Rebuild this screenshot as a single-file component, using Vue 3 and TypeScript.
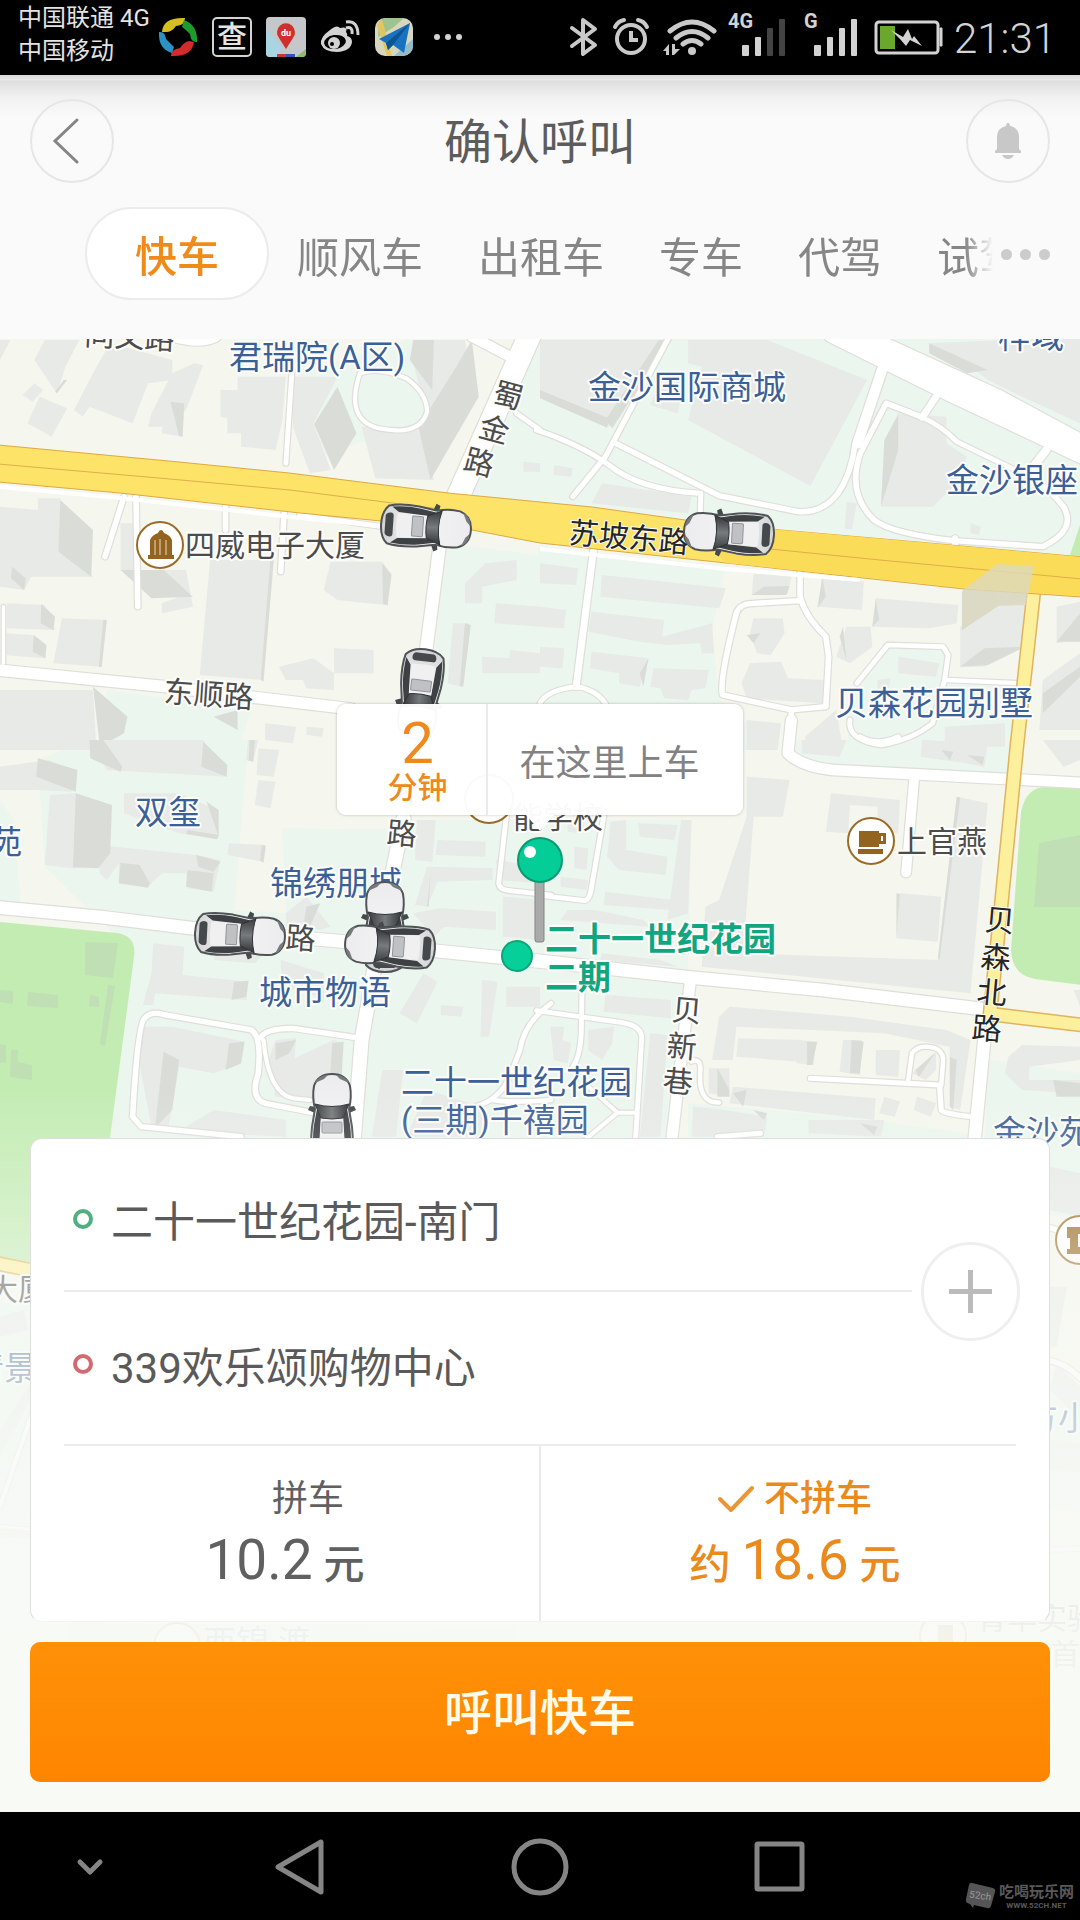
<script setup lang="ts">
import { ref } from 'vue'

interface Road { d: string; w: number }
interface Tile { at: string; land: string[]; flat: string[]; side: string[]; roads: Road[] }
interface Label { text: string; x: number; y: number; kind: string; turn?: number }
interface Car { x: number; y: number; turn: number }

const services = ['快车', '顺风车', '出租车', '专车', '代驾', '试驾']
const activeService = ref('快车')

const rides = [
  { id: 'pool', name: '拼车', prefix: '', price: '10.2' },
  { id: 'solo', name: '不拼车', prefix: '约', price: '18.6' },
]
const ride = ref('solo')

const cars: Car[] = [
  { x: 426, y: 527, turn: 4 },
  { x: 729, y: 533, turn: 183 },
  { x: 420, y: 694, turn: 97 },
  { x: 240, y: 935, turn: 3 },
  { x: 385, y: 927, turn: -90 },
  { x: 390, y: 946, turn: 184 },
  { x: 332, y: 1119, turn: -90 },
]

/* Map sheets: each one is drawn in its own local units. */
const tiles: Tile[] = [
  {
    at: 'translate(0 330) scale(0.3444 0.3333)',
    land: [
      '1600,20 1530,20 1330,500 1600,530',
      '870,130 1180,30 1210,30 1260,260 1090,320 930,380 860,270',
      '1290,640 1600,680 1600,1260 1250,1160',
      '310,1080 730,1140 690,1260 300,1260',
    ],
    flat: [
      '0,30 30,30 0,90',
      '130,30 230,30 190,110 165,190 100,90', '320,40 500,90 500,150 430,160 385,280 260,230 240,260 215,240 275,120',
      '100,160 125,180 95,215 65,195',
      '115,200 195,235 150,320 80,280', '565,100 590,105 540,240 470,290 430,290 440,250 500,130',
      '480,220 535,215 530,320 470,310', '640,180 690,180 690,140 830,140 820,270 800,360 700,350 700,310 660,310 660,265 640,260',
      '850,140 980,140 910,280 960,420 900,430 850,290', '1050,290 1220,290 1260,450 1090,445',
      '0,530 110,540 110,505 175,505 175,660 270,740 0,740', '0,690 90,740 70,780 0,770',
      '350,580 400,580 400,720 540,720 560,830 470,850 470,820 520,800 440,800 350,720',
      '610,690 790,690 765,1050 580,1035', '960,695 1110,695 1135,730 1120,825 980,810 940,780',
      '20,820 130,825 160,900 20,895', '10,910 95,915 130,985 10,975', '180,865 310,870 295,1010 155,1000',
      '970,955 1085,960 1085,1030 970,1030', '810,1010 910,985 970,1030 970,1080 890,1075 880,1050 830,1050',
      '1350,760 1410,700 1500,690 1500,750 1400,770 1400,820 1350,820', '1440,820 1568,830 1568,890 1435,880',
      '1315,880 1360,880 1340,1070 1300,1060', '1400,980 1480,985 1480,960 1568,970 1568,1030 1400,1030',
      '0,1080 270,1080 280,1260 0,1260', '770,1180 860,1190 850,1240 770,1230', '890,1190 940,1195 935,1220 890,1215',
      '1200,30 1350,30 1380,200 1330,300 1270,380 1200,100', '1520,395 1568,400 1568,425 1520,425',
    ],
    side: [
      '980,170 1035,310 970,420 912,282', '1325,110 1370,30 1390,200 1250,450 1215,290', '175,510 270,600 265,740 170,665',
      '350,720 475,720 560,800 440,805', '120,822 160,860 155,900 118,880', '98,915 135,945 132,985 95,965',
      '300,870 310,870 295,1012 287,1010', '1110,700 1137,735 1125,827 1112,820', '785,690 795,690 765,1055 757,1050',
      '35,710 75,745 70,780 32,745', '1200,30 1260,30 1255,180 1190,90', '270,1070 370,1160 360,1210 290,1250',
      '620,1160 690,1140 690,1200', '185,150 195,150 165,190 160,185', '495,215 535,220 530,320 520,318',
      '1350,880 1367,885 1345,1070 1335,1068',
    ],
    roads: [
      { d: 'M1540 10L1330 500', w: 66 }, { d: 'M1280 620L1235 980', w: 36 },
      { d: 'M-10 1020L480 1070L1020 1137', w: 34 }, { d: 'M395 500L400 830', w: 16 }, { d: 'M360 500L305 680', w: 16 },
      { d: 'M848 120L830 400', w: 14 }, { d: 'M655 530L655 600', w: 16 }, { d: 'M825 550L815 725', w: 16 },
      { d: 'M1045 130Q1000 270 1100 295Q1220 320 1240 245Q1240 190 1180 145Q1100 110 1045 130', w: 12 },
      { d: 'M10 830L10 1000', w: 10 }, { d: 'M500 24Q580 50 630 24', w: 20 }, { d: 'M1370 20L1500 90', w: 30 },
      { d: 'M1500 250L1568 300', w: 14 }, { d: 'M870 555L1110 590', w: 14 },
    ],
  },
  {
    at: 'translate(540 330) scale(0.3444 0.3333)',
    land: [
      '-5,20 1600,20 1600,690 -5,520',
      '-5,650 540,710 500,900 520,1110 600,1180 600,1260 -5,1260',
      '920,1060 1020,940 1180,950 1190,1050 1400,1070 1380,1260 900,1260 890,1180',
    ],
    flat: [
      '0,30 360,30 200,290 0,200', '430,30 540,30 660,30 950,150 785,468 430,270 470,110 430,100', '360,130 420,150 400,250 320,225',
      '1040,250 1180,260 1180,340 1240,380 1200,470 1140,530 990,530 1000,330', '1130,40 1568,20 1568,280 1400,200 1300,150 1240,100 1130,60',
      '180,460 440,500 430,550 150,520', '890,515 920,520 905,600 885,595', '0,700 110,715 105,765 0,760',
      '180,735 540,775 520,835 175,800', '0,830 75,840 70,895 0,890', '150,845 360,870 355,920 500,880 505,970 470,970 465,940 370,945 290,935 140,905',
      '0,950 70,955 65,1015 0,1010', '150,965 315,985 300,1025 290,1070 230,1060 230,1030 145,1015',
      '330,1015 490,1020 480,1075 440,1080 430,1110 360,1105 350,1075 320,1070', '620,730 730,740 720,790 615,795',
      '820,735 940,755 935,840 810,830', '975,805 1215,825 1210,880 1130,895 965,890', '620,865 705,865 710,910 670,975 630,970 610,910',
      '610,1000 700,995 720,1045 825,1050 820,1120 600,1105 585,1060', '890,890 960,890 965,950 900,1000 860,980',
      '1040,980 1160,1000 1150,1040 1040,1030', '1220,890 1330,820 1420,820 1410,950 1290,1010 1220,1010', '1500,830 1568,815 1568,930 1500,940',
      '1460,1050 1568,970 1568,1200 1450,1200', '1175,1190 1350,1180 1350,1250 1175,1250', '600,1170 700,1180 690,1260 600,1260', '860,1140 880,1260 770,1260 770,1220',
      '1250,580 1280,590 1275,615 1250,610', '40,405 95,415 90,440 40,435', '980,1050 1020,1045 1010,1080 980,1085',
    ],
    side: [
      '345,30 375,30 210,295 190,270', '0,180 200,265 195,293 0,205', '1000,330 1040,255 1040,360 990,530', '1225,785 1330,700 1335,825 1225,900',
      '1330,705 1435,705 1415,820 1335,825', '615,795 650,770 725,768 715,795', '805,835 820,740 830,800',
      '965,890 975,808 985,870', '1290,955 1410,950 1300,1005 1220,1010', '600,915 640,910 620,940', '1460,1090 1568,1010 1568,1040 1460,1150',
      '1500,935 1568,850 1568,935', '290,1030 315,985 300,1070', '870,920 880,890 890,990', '1130,40 1300,120 1240,130 1130,70',
    ],
    roads: [
      { d: 'M850 10L1190 185L1600 385', w: 56 }, { d: 'M930 10L1330 200L1600 350', w: 42 },
      { d: 'M375 20L190 380L95 500', w: 15 }, { d: 'M-10 300Q120 345 200 405Q290 480 465 490', w: 15 },
      { d: 'M220 340L520 497L750 545Q820 550 865 490Q905 430 915 340', w: 16 }, { d: 'M467 490L465 560', w: 14 },
      { d: 'M993 120L922 340', w: 30 }, { d: 'M1110 262L1005 220L930 370Q890 490 970 570Q1020 610 1200 632L1460 650Q1560 600 1520 530Q1490 490 1430 440', w: 16 },
      { d: 'M1110 262Q1170 290 1210 335L1420 440', w: 14 }, { d: 'M1110 262L1150 200', w: 20 }, { d: 'M1425 420L1470 360', w: 24 },
      { d: 'M1205 625L1205 650', w: 18 }, { d: 'M155 665L148 720L105 1070', w: 20 }, { d: 'M105 1070Q20 1080 0 1120', w: 14 },
      { d: 'M105 1070Q170 1080 195 1130', w: 14 }, { d: 'M755 730L755 800Q770 860 830 920L838 980L830 1130L730 1140L530 1095Q520 1050 570 850Q580 820 620 820L755 812', w: 16 },
      { d: 'M730 1140L725 1260', w: 16 }, { d: 'M920 1060L1010 945L1170 950L1185 975L1175 1050L1140 1180Q1080 1230 990 1245Q890 1230 900 1170', w: 14 },
      { d: 'M1180 1050L1400 1060', w: 13 },
    ],
  },
  {
    at: 'translate(0 740) scale(0.3444 0.3333)',
    land: [
      '110,60 260,0 720,0 680,510 830,520 820,265 1110,270 1160,240 1568,240 1568,1240 300,1240 390,640 250,500 130,380',
      '0,180 40,240 60,490 0,490',
    ],
    flat: [
      '0,80 140,60 220,90 210,155 110,150 0,150', '260,0 590,0 660,110 310,90', '145,165 220,160 325,200 280,380 210,385 130,375',
      '360,160 520,160 630,210 635,295 520,280 360,220', '280,315 570,345 640,360 620,455 545,445 540,400 470,400 430,440 345,430 345,370 310,420 290,400',
      '665,310 770,315 765,365 660,345', '750,25 810,30 795,110 745,105', '750,120 800,125 785,205 740,195',
      '445,610 535,620 530,705 720,725 715,780 450,760 445,795 415,795 440,700', '415,860 500,860 710,905 700,970 620,1000 520,980 490,1160 440,1160 410,1000 400,900',
      '800,900 860,895 855,955 970,900 995,910 990,1000 970,1080 800,1070 780,960', '620,1110 830,1140 830,1190 600,1180 540,1160',
      '1210,240 1265,240 1255,365 1205,360', '1270,300 1410,305 1410,350 1265,345', '1240,380 1430,385 1430,420 1270,425 1240,500 1205,495',
      '1280,505 1440,515 1440,570 1290,560 1260,590 1200,520', '1230,700 1270,725 1210,850 1160,820', '1400,720 1445,725 1420,890 1395,890',
      '1470,740 1568,740 1568,800 1470,800', '1280,795 1345,800 1340,830 1280,825', '815,660 940,700 940,790 880,740 820,760', '890,470 960,560 930,570 830,560 830,520',
      '1110,990 1170,990 1150,1190 1080,1190', '1240,1050 1400,1100 1400,1190 1180,1190', '720,0 750,0 735,65 715,60', '1460,470 1568,480 1568,600 1460,590',
      '640,610 780,625 740,670 620,660', '1440,360 1568,380 1568,430 1445,420',
    ],
    side: [
      '110,55 225,90 220,155 105,110', '220,160 325,195 320,340 285,385 212,382', '260,0 300,0 355,80 350,95 262,55', '590,5 660,75 658,110 585,80',
      '570,345 640,365 620,395 575,380', '545,390 620,400 615,455 540,440', '350,368 405,375 435,430 430,443 345,430', '680,725 722,722 715,770 672,780',
      '665,910 710,905 700,970 655,990', '475,935 520,960 500,1110 450,1165', '965,910 998,905 990,1040 955,1070', '545,270 635,285 630,298 540,282',
      '760,315 772,318 765,368 755,362', '600,185 635,210 635,290', '800,910 860,900 840,940 800,960', '890,500 930,490 900,560 880,560',
      '725,0 740,0 735,65 722,62', '1240,500 1250,400 1245,500',
    ],
    roads: [
      { d: 'M-10 502L300 532L560 565L1000 605L1600 668', w: 38 }, { d: 'M1172 235L1145 370L1095 640L1050 900L1025 1230', w: 40 },
      { d: 'M700 1190L410 1160L385 1130Q400 850 420 835Q440 810 480 825L730 870Q760 890 750 1000Q725 1075 770 1090L920 1120', w: 16 },
      { d: 'M755 895Q770 865 850 865L1050 895', w: 16 }, { d: 'M765 900Q780 1060 850 1075L900 1080', w: 12 },
      { d: 'M1470 230L1448 430Q1450 450 1480 452L1600 465', w: 14 }, { d: 'M1600 790Q1520 850 1510 930L1480 1010Q1450 1080 1380 1100', w: 14 },
      { d: 'M1430 1080Q1480 1090 1600 1080', w: 14 },
    ],
  },
  {
    at: 'translate(540 740) scale(0.3444 0.3333)',
    land: [
      '-5,240 440,240 430,650 420,800 370,1240 -5,1240', '700,0 1370,0 1360,100 850,90 740,50',
      '430,1090 880,1130 1240,1180 1240,1240 430,1240', '1300,960 1568,1000 1568,1240 1290,1240',
    ],
    flat: [
      '600,110 725,120 705,230 620,230 590,640 1155,660 1210,170 1300,190 1250,760 470,680 480,500 520,480 600,230',
      '845,160 1045,180 1040,280 980,280 980,200 900,195 895,280 830,275', '1045,460 1165,470 1155,605 1035,595',
      '205,245 250,240 250,330 370,350 365,405 230,390 195,350', '285,250 400,255 390,300 290,290', '190,455 385,480 380,510 185,495',
      '80,240 130,245 125,280 80,275', '100,320 140,325 135,390 100,385', '60,410 140,420 135,450 60,440', '80,510 160,510 300,540 320,560 60,540',
      '410,240 440,240 430,520 370,540', '180,640 350,660 400,680 175,660', '190,765 380,780 380,835 185,815', '550,800 900,830 1180,870 1250,900 1220,1110 1190,1100 1190,920 1000,880 570,860 560,960 500,960 520,830',
      '575,895 760,900 750,965 570,950', '750,900 800,905 795,975 745,970', '880,900 935,900 930,1005 870,995', '975,930 1045,930 1040,1010 975,1005',
      '490,985 550,985 550,1070 490,1060', '560,1040 975,1075 970,1140 550,1090', '1000,1070 1045,1085 1030,1130 985,1120', '1095,1070 1150,1090 1135,1130 1085,1110',
      '445,1100 500,1105 660,1130 650,1190 440,1190', '780,1140 1000,1140 990,1190 780,1180', '320,880 370,885 350,1190 290,1190', '760,0 890,0 870,50 760,40',
      '1110,0 1300,10 1290,80 1240,70 1170,60 1105,50', '1460,0 1568,0 1568,60 1520,80', '1400,915 1568,920 1568,960 1420,980 1420,1020 1568,1020 1568,1060 1400,1050 1350,1000 1360,950', '30,860 70,860 65,900 90,910 80,970 40,960', '140,870 215,860 210,910 180,960 140,930',
      '1080,1000 1150,940 1150,990 1120,1020', '1550,750 1568,750 1568,800',
    ],
    side: [
      '775,905 805,905 790,975 775,975', '905,900 940,905 928,1000 900,1000', '1090,990 1150,935 1100,1010', '1190,950 1210,960 1200,1110 1190,1100', '1035,460 1045,462 1035,595', '1210,170 1220,172 1160,660 1155,655',
      '1490,1020 1568,1030 1568,1070 1500,1070', '515,985 550,1050 550,1070 515,1070', '560,1060 600,1050 590,1100', '620,1110 660,1120 650,1140', '930,1150 980,1160 970,1185', '1165,30 1200,35 1190,60', '1240,45 1290,50 1285,75',
    ],
    roads: [
      { d: 'M730 -60L720 40Q760 80 850 90L1600 130', w: 32 }, { d: 'M1087 110L1063 398', w: 28 }, { d: 'M-10 662L430 712L820 750L1290 808', w: 38 },
      { d: 'M437 720L378 1240', w: 32 }, { d: 'M440 965Q470 950 465 1000Q460 1090 520 1088', w: 13 }, { d: 'M785 1015L1160 1035L1165 1110Q1165 1120 1250 1130', w: 15 },
      { d: 'M1068 1030L1080 940Q1100 910 1150 925Q1175 940 1170 970L1165 1035', w: 13 }, { d: 'M1292 880L1258 1240', w: 36 }, { d: 'M560 1240L515 1190L640 1180', w: 15 },
      { d: 'M-10 465L130 482Q145 480 150 440L185 230', w: 14 }, { d: 'M122 745L120 870Q118 950 95 980', w: 14 }, { d: 'M-10 812L240 848Q300 860 295 900L275 1240', w: 14 },
      { d: 'M130 1030L225 1118L275 1118', w: 12 }, { d: 'M225 1118L130 1200', w: 12 }, { d: 'M930 -10Q980 20 1040 -10', w: 14 },
    ],
  },
  {
    at: 'translate(0 1130) scale(0.3444 0.3333)',
    land: ['0,520 110,520 110,1600 0,1600'],
    flat: ['0,560 70,540 80,600 0,620', '90,760 100,790 0,980 0,900', '0,1180 100,1190 100,1225 0,1220', '200,1480 1500,1490 1500,1530 200,1530'],
    side: [],
    roads: [{ d: 'M110 800L0 1130', w: 12 }, { d: 'M0 1190L110 1200', w: 10 }],
  },
  {
    at: 'translate(540 1130) scale(0.3444 0.3333)',
    land: ['1470,20 1600,20 1600,300 1470,250', '1470,800 1600,820 1600,1150 1470,1130'],
    flat: ['1480,110 1568,130 1568,260 1480,240', '1480,470 1530,470 1500,650 1480,650', '1500,700 1600,800 1600,900 1480,780', '1480,930 1600,940 1600,1030 1480,1020'],
    side: [],
    roads: [{ d: 'M1470 290L1600 330', w: 16 }, { d: 'M1470 690Q1540 700 1600 780', w: 16 }, { d: 'M1470 1260L1600 1255', w: 12 }],
  },
]

const labels: Label[] = [
  { text: '同文路', x: 84, y: 345, kind: 'street', turn: 3 },
  { text: '君瑞院(A区)', x: 229, y: 369, kind: 'area' },
  { text: '金沙国际商城', x: 588, y: 399, kind: 'area' },
  { text: '梓域', x: 998, y: 348, kind: 'area' },
  { text: '金沙银座', x: 946, y: 492, kind: 'area' },
  { text: '四威电子大厦', x: 185, y: 556, kind: 'place' },
  { text: '苏坡东路', x: 568, y: 543, kind: 'main', turn: 5 },
  { text: '蜀', x: 491, y: 402, kind: 'street', turn: 15 },
  { text: '金', x: 477, y: 436, kind: 'street', turn: 15 },
  { text: '路', x: 462, y: 469, kind: 'street', turn: 15 },
  { text: '东顺路', x: 163, y: 702, kind: 'street', turn: 4 },
  { text: '贝森花园别墅', x: 835, y: 715, kind: 'area' },
  { text: '双玺', x: 135, y: 824, kind: 'area' },
  { text: '苑', x: -11, y: 854, kind: 'area' },
  { text: '路', x: 386, y: 843, kind: 'street', turn: 5 },
  { text: '能学校', x: 513, y: 828, kind: 'place' },
  { text: '锦绣朋城', x: 270, y: 895, kind: 'area' },
  { text: '路', x: 285, y: 948, kind: 'street', turn: 4 },
  { text: '城市物语', x: 259, y: 1004, kind: 'area' },
  { text: '上官燕', x: 897, y: 852, kind: 'place' },
  { text: '贝', x: 984, y: 930, kind: 'main', turn: 5 },
  { text: '森', x: 980, y: 967, kind: 'main', turn: 5 },
  { text: '北', x: 976, y: 1002, kind: 'main', turn: 5 },
  { text: '路', x: 971, y: 1038, kind: 'main', turn: 5 },
  { text: '贝', x: 671, y: 1020, kind: 'street', turn: 5 },
  { text: '新', x: 666, y: 1056, kind: 'street', turn: 5 },
  { text: '巷', x: 662, y: 1091, kind: 'street', turn: 5 },
  { text: '二十一世纪花园', x: 401, y: 1094, kind: 'area' },
  { text: '(三期)千禧园', x: 401, y: 1132, kind: 'area' },
  { text: '金沙苑', x: 993, y: 1144, kind: 'area' },
  { text: '大厦', x: -12, y: 1300, kind: 'place' },
  { text: '清景', x: -29, y: 1380, kind: 'area' },
  { text: '方小', x: 1025, y: 1430, kind: 'area' },
  { text: '青羊实验', x: 977, y: 1629, kind: 'place' },
  { text: '首楼', x: 1050, y: 1665, kind: 'place' },
  { text: '西锦·渡', x: 203, y: 1654, kind: 'area' },
]
</script>

<template>
  <div class="phone">
    <header class="status">
      <div class="carriers"><span>中国联通 4G</span><span>中国移动</span></div>
      <div class="notices">
        <svg width="40" height="40" viewBox="0 0 40 40">
          <path d="M4 15Q5 0 27 1Q27 8 18 9Q14 15 8 15Z" fill="#d6bd22" />
          <path d="M26 3Q40 8 39 25Q33 26 32 17Q27 12 24 10Z" fill="#1f9a2c" />
          <path d="M36 25Q34 40 13 39Q13 32 22 31Q26 25 31 24Z" fill="#d42c2c" />
          <path d="M14 36Q0 32 1 15Q7 14 8 22Q13 27 16 30Z" fill="#2b93c4" />
        </svg>
        <span class="scan">查</span>
        <svg width="40" height="40" viewBox="0 0 40 40">
          <rect width="40" height="40" rx="4" fill="#c4c8ca" />
          <path d="M0 12L16 30L12 40H4Q0 40 0 36Z" fill="#a9d4e2" />
          <path d="M30 40L40 32V36Q40 40 36 40Z" fill="#8fc060" /><path d="M11 37H20V40H11Z" fill="#c43838" /><path d="M20 37H29V40H20Z" fill="#3156b8" />
          <path d="M20 32L13 21A9 9 0 1 1 27 21Z" fill="#d02f2b" />
          <text x="20" y="19" text-anchor="middle" font-size="9" font-weight="700" fill="#fff">du</text>
        </svg>
        <svg width="40" height="40" viewBox="0 0 40 40" fill="none" stroke="#d3d3d3">
          <path d="M26 15Q28 9 20 11Q17 7 10 13Q0 20 1 27Q4 35 17 35Q31 34 32 25Q32 20 27 19Q28 17 26 15Z" fill="#d3d3d3" stroke="none" />
          <ellipse cx="15" cy="25" rx="11" ry="7" fill="#000" stroke="none" transform="rotate(-8 15 25)" />
          <circle cx="14" cy="26" r="6" fill="#d3d3d3" stroke="none" /><circle cx="12" cy="27" r="2" fill="#000" stroke="none" />
          <path d="M26 5Q38 3 38 18" stroke-width="3" /><path d="M26 11Q33 9 32 17" stroke-width="3" />
        </svg>
        <svg width="40" height="40" viewBox="0 0 40 40">
          <rect x="1" y="1" width="38" height="38" rx="10" fill="#d8d6bd" />
          <path d="M5 5Q8 1 14 1H30L20 10L4 20Z" fill="#9ec38d" /><path d="M8 2L18 39H13L3 8Z" fill="#e2c65f" /><path d="M20 39L39 22V30Q37 38 29 39Z" fill="#93bccb" />
          <path d="M36 6L5 22L12 26L14 33L19 28L30 36Z" fill="#1773bf" /><path d="M36 6L12 26L14 33L19 28Z" fill="#0d5592" />
        </svg>
        <svg width="34" height="40" viewBox="0 0 34 40" fill="#d3d3d3"><circle cx="9" cy="20" r="3" /><circle cx="20" cy="20" r="3" /><circle cx="31" cy="20" r="3" /></svg>
      </div>
      <div class="system">
        <svg width="34" height="40" viewBox="566 17 34 40" fill="none" stroke="#c9c9c9" stroke-width="4" stroke-linejoin="round" stroke-linecap="round"><path d="M572 28L595 45L583 54V20L595 29L572 46" /></svg>
        <svg width="42" height="40" viewBox="611 17 42 40" fill="none" stroke="#c9c9c9" stroke-width="4"><circle cx="632" cy="39" r="14" /><path d="M632 31V40H639" /><path d="M616 27Q619 21 625 20M639 20Q645 21 648 27" stroke-linecap="round" /></svg>
        <svg width="56" height="40" viewBox="662 17 56 40" fill="none" stroke="#c9c9c9" stroke-width="5" stroke-linecap="round"><path d="M670 31Q692 13 714 31M676 38Q692 25 708 38M683 44Q692 37 701 44" /><circle cx="692" cy="51" r="4" fill="#c9c9c9" stroke="none" /><path d="M663 51L669 44V55H666V51ZM672 44H675V49H680L674 55H672Z" fill="#c9c9c9" stroke="none" /></svg>
        <svg class="signal" width="58" height="48" viewBox="728 9 58 48" fill="#d3d3d3"><text x="728" y="28">4G</text><rect x="742" y="45" width="7" height="11" rx="1" /><rect x="755" y="37" width="6" height="19" rx="1" /><rect x="767" y="28" width="6" height="28" rx="1" fill="#444" /><rect x="779" y="19" width="6" height="37" rx="1" fill="#444" /></svg>
        <svg class="signal" width="62" height="48" viewBox="796 9 62 48" fill="#d3d3d3"><text x="804" y="28">G</text><rect x="814" y="45" width="7" height="11" rx="1" /><rect x="827" y="37" width="6" height="19" rx="1" /><rect x="839" y="28" width="6" height="28" rx="1" /><rect x="851" y="19" width="6" height="37" rx="1" /></svg>
        <svg width="76" height="40" viewBox="868 17 76 40" fill="#d3d3d3"><rect x="876" y="22" width="62" height="31" rx="3" fill="none" stroke="#d3d3d3" stroke-width="3" /><path d="M940 28H942V46H940Z" stroke="#d3d3d3" /><rect x="880" y="26" width="15" height="23" fill="#69a82c" /><path d="M891 30L903 37L908 29L912 39L914 36L922 46L910 40L906 46L900 39Z" /></svg>
        <time>21:31</time>
      </div>
    </header>

    <section class="top">
      <div class="title-row">
        <button class="round" aria-label="返回"><svg width="40" height="60" viewBox="0 0 40 60" fill="none" stroke="#858585" stroke-width="3" stroke-linecap="round"><path d="M25 9L3 30L25 51" /></svg></button>
        <h1>确认呼叫</h1>
        <button class="round" aria-label="消息"><svg width="28" height="38" viewBox="0 0 28 38" fill="#c8c8c8"><path d="M14 1Q16 1 16 4Q25 6 25 15V27L27 29V31H1V29L3 27V15Q3 6 12 4Q12 1 14 1Z" /><path d="M8 33H20Q18 37 14 37Q10 37 8 33Z" /></svg></button>
      </div>
      <nav class="services">
        <div class="strip">
          <button v-for="s in services" :key="s" :class="{ active: s === activeService }" @click="activeService = s">{{ s }}</button>
        </div>
        <button class="more" aria-label="更多"><i></i><i></i><i></i></button>
      </nav>
    </section>

    <main>
      <svg class="map" viewBox="0 339 1080 1473" preserveAspectRatio="xMidYMin slice" aria-hidden="true">
        <defs>
          <linearGradient id="haze" x1="0" y1="0" x2="0" y2="1">
            <stop offset="0" stop-color="#f8faf6" stop-opacity="0" /><stop offset="0.25" stop-color="#f8faf6" stop-opacity="0.5" />
            <stop offset="0.5" stop-color="#f8faf6" stop-opacity="0.78" /><stop offset="0.75" stop-color="#f8faf6" stop-opacity="0.95" /><stop offset="1" stop-color="#f8faf6" />
          </linearGradient>
          <linearGradient id="glass" x1="0" y1="0" x2="0" y2="1"><stop offset="0" stop-color="#3a3d40" /><stop offset="0.5" stop-color="#777b7e" /><stop offset="1" stop-color="#323436" /></linearGradient>
          <linearGradient id="paint" x1="0" y1="0" x2="1" y2="0"><stop offset="0" stop-color="#d2d3d4" /><stop offset="0.4" stop-color="#f4f4f5" /><stop offset="1" stop-color="#ececee" /></linearGradient>
          <g id="car">
            <path d="M6 -17L9 -24L13 -22L12 -17ZM6 17L9 24L13 22L12 17Z" fill="#46494b" />
            <path d="M-38 -19Q-26 -22 -8 -20L10 -17Q22 -20 33 -18Q45 -14 45 0Q45 14 33 18Q22 20 10 17L-8 20Q-26 22 -38 19Q-45 13 -45 0Q-45 -13 -38 -19Z" fill="url(#paint)" stroke="#505356" stroke-width="2" />
            <path d="M-35 -18Q-20 -20 -6 -18L10 -15L4 -11L-28 -13ZM-35 18Q-20 20 -6 18L10 15L4 11L-28 13Z" fill="#3e4144" />
            <path d="M-29 -12L2 -11V11L-29 12Q-31 0 -29 -12Z" fill="#f0f0f1" />
            <path d="M-41 -9Q-40 -12 -36 -12Q-33 -12 -33 -9V9Q-33 12 -36 12Q-40 12 -41 9Z" fill="#46494b" />
            <rect x="-14" y="-10" width="11" height="20" rx="1" fill="#bfc1c4" stroke="#929598" />
            <path d="M1 -11L15 -17Q10 0 15 17L1 11Q-1 0 1 -11Z" fill="url(#glass)" stroke="#303234" />
            <path d="M36 -17Q44 -13 44 -4L40 -8ZM36 17Q44 13 44 4L40 8Z" fill="#777a7d" />
          </g>
        </defs>
        <rect y="339" width="1080" height="1473" fill="#f5f6ed" />
        <g v-for="t in tiles" :key="t.at" :transform="t.at" fill="#ebf6ee"><polygon v-for="p in t.land" :key="p" :points="p" /></g>
        <path d="M0 922L117 933Q137 936 134 957L110 1138L88 1272L0 1258Z" fill="#c3ecb3" />
        <path d="M1046 787Q1026 787 1021 812L1011 950Q1012 975 1035 979L1090 986V787ZM1080 525L1070 555L1080 558Z" fill="#c3ecb3" />
        <path d="M1039 843L1080 835V907H1034ZM85 942L118 943L113 978L85 975ZM28 992L58 995V1008L27 1006ZM0 990L13 991V1004L0 1002ZM108 985L115 986L105 1046L100 1044ZM90 995L99 997V1007L89 1006ZM11 1050L18 1050V1062L32 1065V1080L10 1077ZM0 1044L6 1045V1063L0 1062Z" fill="#c0dfb4" />
        <g v-for="t in tiles" :key="t.at" :transform="t.at"><polygon v-for="p in t.flat" :key="p" :points="p" fill="#e7eae6" /><polygon v-for="p in t.side" :key="p" :points="p" fill="#dadcd8" /></g>
        <g v-for="t in tiles" :key="t.at" :transform="t.at" fill="none" stroke="#dfdeda" stroke-linecap="round" stroke-linejoin="round"><path v-for="r in t.roads" :key="r.d" :d="r.d" :stroke-width="r.w + 7" /></g>
        <g v-for="t in tiles" :key="t.at" :transform="t.at" fill="none" stroke="#fff" stroke-linecap="round" stroke-linejoin="round"><path v-for="r in t.roads" :key="r.d" :d="r.d" :stroke-width="r.w" /></g>
        <g fill="none">
          <path d="M1034 590L1017 745L1001 907L990 1014L1090 1026M-10 1262L40 1272" stroke="#e0b35c" stroke-width="15" />
          <path d="M1034 590L1017 745L1001 907L990 1014L1090 1026M-10 1262L40 1272" stroke="#fdf09c" stroke-width="12" />
        </g>
        <path d="M-2 445L179 462L289 473L448 493L540 502L592 507L685 520L781 530L929 543L1082 557V597L964 589L726 563L540 543L472 530L300 513L120 493L-2 482Z" fill="#fde368" stroke="#dfa842" />
        <path d="M726 563L685 520L781 530L929 543L1080 557V596L964 588Z" fill="#fbdc58" />
        <path d="M-2 464L170 479L290 490L440 509M760 548L880 560L1082 579" fill="none" stroke="#dfae4c" />
        <path d="M963 590L997 564L1034 566L1026 605L998 606L962 630Z" fill="#dcdac0" opacity="0.8" />
        <path d="M0 487L120 498L300 518L380 526M540 549L726 569L860 580" fill="none" stroke="#fff" stroke-width="4" />

        <g fill="#fff" stroke="#9a6b24" stroke-width="2">
          <circle cx="160" cy="545" r="23" /><circle cx="871" cy="841" r="23" /><circle cx="489" cy="799" r="24" /><circle cx="1080" cy="1240" r="24" />
          <circle cx="177" cy="1646" r="23" /><circle cx="943" cy="1636" r="23" />
        </g>
        <g fill="#94631d">
          <path d="M148 559V555H150V540Q152 535 158 533Q159 530 161 530Q163 530 164 533Q170 535 172 540V555H174V559Z" />
          <path d="M859 831H879V833H886V844H879V847H859ZM881 836V841H883V836ZM858 849H883V854H858Z" fill-rule="evenodd" />
          <path d="M1067 1227H1080V1234H1078V1247H1080V1254H1067V1249H1070V1238H1067Z" /><path d="M938 1625H953V1645H938Z" />
        </g>
        <path d="M155 540V555M160 539V555M166 540V555" stroke="#e9dcc2" stroke-width="1" />
        <g class="labels">
          <text v-for="(l, i) in labels" :key="i" :class="l.kind" :x="l.x" :y="l.y" :transform="`rotate(${l.turn ?? 0} ${l.x} ${l.y})`">{{ l.text }}</text>
          <text class="pickup" x="545" y="951">二十一世纪花园</text>
          <text class="pickup" x="545" y="989">二期</text>
        </g>
        <use v-for="(c, i) in cars" :key="i" href="#car" :transform="`translate(${c.x} ${c.y}) rotate(${c.turn})`" />
        <rect x="535" y="880" width="9" height="62" rx="2" fill="#aaa" stroke="#858585" />
        <circle cx="540" cy="860" r="22" fill="#04cd98" stroke="#079a70" stroke-width="2" />
        <circle cx="530" cy="852" r="6" fill="#fff" />
        <circle cx="517" cy="956" r="15" fill="#06cf9a" stroke="#0ba678" stroke-width="2" />
        <rect y="1090" width="1080" height="722" fill="url(#haze)" />
      </svg>

      <div class="bubble">
        <div class="eta"><strong>2</strong><span>分钟</span></div>
        <div class="here">在这里上车</div>
      </div>

      <section class="card">
        <div class="route">
          <div class="stop from"><i></i><span>二十一世纪花园-南门</span></div>
          <div class="stop to"><i></i><span>339欢乐颂购物中心</span></div>
          <button class="add" aria-label="添加"></button>
        </div>
        <div class="rides">
          <label v-for="r in rides" :key="r.id" :class="{ chosen: ride === r.id }">
            <input v-model="ride" type="radio" name="ride" :value="r.id" />
            <span class="name">
              <svg width="36" height="28" viewBox="0 0 36 28" fill="none" stroke="#eb9634" stroke-width="4" stroke-linecap="round" stroke-linejoin="round"><path d="M2 14L13 25L34 3" /></svg>
              {{ r.name }}
            </span>
            <span class="price"><small v-if="r.prefix">{{ r.prefix }}</small><b>{{ r.price }}</b><small>元</small></span>
          </label>
        </div>
      </section>
      <button class="call">呼叫快车</button>
    </main>

    <footer>
      <button aria-label="收起"><svg width="30" height="20" viewBox="0 0 30 20" fill="none" stroke="#858585" stroke-width="5" stroke-linecap="round" stroke-linejoin="round"><path d="M5 6L15 16L25 6" /></svg></button>
      <button aria-label="后退"><svg width="60" height="60" viewBox="0 0 60 60" fill="none" stroke="#858585" stroke-width="5" stroke-linejoin="round"><path d="M8 31L51 6V56Z" /></svg></button>
      <button aria-label="主页"><svg width="60" height="60" viewBox="0 0 60 60" fill="none" stroke="#858585" stroke-width="5"><circle cx="30" cy="31" r="26" /></svg></button>
      <button aria-label="最近任务"><svg width="60" height="60" viewBox="0 0 60 60" fill="none" stroke="#858585" stroke-width="5"><rect x="7" y="8" width="45" height="45" rx="1" /></svg></button>
      <div class="mark">
        <svg width="32" height="30" viewBox="0 0 32 30"><path d="M7 1L28 6Q31 7 30 10L26 24Q25 27 22 26L9 23L8 26L5 22Q0 21 1 17L4 3Q5 0 7 1Z" fill="#555" /><text x="15" y="17" text-anchor="middle" font-size="10" fill="#999" transform="rotate(8 15 15)">52ch</text></svg>
        <div><b>吃喝玩乐网</b><small>WWW.52CH.NET</small></div>
      </div>
    </footer>
  </div>
</template>

<style>
body { margin: 0; background: #000; }
</style>

<style scoped>
* { box-sizing: border-box; }
.phone { min-height: 100vh; display: flex; flex-direction: column; font-family: Roboto, "Noto Sans CJK SC", sans-serif; color: #606060; overflow: hidden; }
button { border: 0; padding: 0; background: none; font: inherit; color: inherit; cursor: pointer; }
svg { display: block; flex: none; }

.status { height: 75px; background: #000; color: #e4e4e4; display: flex; align-items: flex-start; padding: 0 24px 0 18px; }
.carriers { display: flex; flex-direction: column; width: 140px; font-size: 24px; line-height: 33px; white-space: nowrap; padding-top: 2px; }
.notices { display: flex; gap: 14px; padding-top: 17px; }
.scan { width: 40px; height: 40px; border: 2px solid #d3d3d3; border-radius: 5px; font-size: 30px; line-height: 36px; text-align: center; font-weight: 500; }
.system { margin-left: auto; display: flex; align-items: flex-end; gap: 10px; height: 57px; }
.signal text { font-size: 20px; font-weight: 700; }
time { font-size: 42px; line-height: 36px; font-weight: 300; color: #d3d3d3; }

.top { background: linear-gradient(#d9d9d9 0, #e8e8e8 5px, #dedede 6px, #f1f1f1 22px, #fafafa 42px); padding: 24px 30px 39px; }
.title-row { display: flex; align-items: center; justify-content: space-between; height: 84px; }
h1 { margin: 0; padding-top: 4px; font-size: 48px; line-height: 56px; font-weight: 400; color: #5c5c5c; }
.round { width: 84px; height: 84px; border: 2px solid #e6e6e6; border-radius: 50%; display: flex; align-items: center; justify-content: center; }
.services { margin-top: 24px; display: flex; align-items: center; justify-content: space-between; gap: 8px; padding-left: 55px; }
.strip { flex: 1; min-width: 0; overflow: hidden; display: flex; mask-image: linear-gradient(to right, #000 calc(100% - 28px), transparent); }
.strip button { flex: none; height: 93px; padding: 2px 27px 0 28px; font-size: 42px; color: #868686; white-space: nowrap; }
.strip .active { padding: 0 50px; background: #fff; border: 2px solid #ececec; border-radius: 47px; color: #f08a18; font-weight: 500; width: 184px; display: flex; justify-content: center; align-items: center; }
.more { display: flex; gap: 8px; padding-top: 2px; }
.more i { width: 11px; height: 11px; border-radius: 50%; background: #ccc; }

main { flex: 1; position: relative; display: flex; flex-direction: column; padding: 365px 30px 30px; }
.map { position: absolute; inset: 0; width: 100%; height: 100%; }
.labels text { paint-order: stroke; stroke: #fcfdfa; stroke-width: 4px; stroke-linejoin: round; font-size: 30px; fill: #4c4c4c; }
.labels .area { font-size: 33px; fill: #3b6098; }
.labels .main { fill: #262626; stroke-width: 2px; }
.labels .pickup { font-size: 33px; font-weight: 700; fill: #12a680; }

.bubble { position: relative; align-self: center; display: flex; width: 406px; height: 111px; background: rgba(255, 255, 255, 0.97); border-radius: 9px; box-shadow: 0 0 3px rgba(0, 0, 0, 0.25); }
.bubble::after { content: ""; position: absolute; left: 50%; top: 100%; margin-left: -14px; border: 14px solid transparent; border-top: 16px solid rgba(255, 255, 255, 0.97); border-bottom: 0; }
.eta { width: 151px; padding: 11px 0 0 12px; border-right: 2px solid #ebebeb; display: flex; flex-direction: column; align-items: center; color: #ee8a1c; }
.eta strong { font-size: 58px; line-height: 56px; font-weight: 400; }
.eta span { font-size: 30px; line-height: 34px; font-weight: 500; }
.here { flex: 1; padding: 0 12px 0 0; display: flex; align-items: center; justify-content: center; font-size: 36px; color: #828282; }

.card { position: relative; margin-top: 323px; background: #fff; border: 1px solid #dfe0de; border-radius: 12px; border-bottom-color: #f4f4f2; }
.route { position: relative; padding: 8px 33px 0; }
.stop { display: flex; align-items: center; gap: 18px; height: 145px; padding-left: 9px; font-size: 42px; color: #5a5a5a; border-bottom: 2px solid #ebebeb; }
.stop.from { margin-right: 104px; }
.stop.to { height: 154px; padding-bottom: 8px; }
.stop i { width: 20px; height: 20px; border: 4px solid #52af82; border-radius: 50%; }
.stop.to i { border-color: #d06c70; }
.add { position: absolute; right: 29px; top: 103px; width: 99px; height: 99px; border: 3px solid #efefef; border-radius: 50%; background: linear-gradient(#bbb, #bbb) center / 43px 5px no-repeat, linear-gradient(#bbb, #bbb) center / 5px 43px no-repeat, #fff; }
.rides { display: flex; height: 175px; }
.rides label { flex: 1; display: flex; flex-direction: column; align-items: center; padding-top: 30px; cursor: pointer; }
.rides label + label { border-left: 2px solid #ebebeb; }
.rides input { position: absolute; opacity: 0; }
.name { display: flex; align-items: center; gap: 10px; font-size: 36px; line-height: 46px; }
.name svg { visibility: hidden; }
.chosen .name svg { visibility: visible; }
.chosen { color: #ea8a1c; }
.chosen .name { font-weight: 500; }
.price { display: flex; align-items: baseline; gap: 11px; line-height: 76px; }
.price b { font-size: 55px; font-weight: 400; }
.price small { font-size: 41px; font-weight: 500; }

.call { position: relative; margin-top: 20px; height: 140px; padding-bottom: 6px; border-radius: 10px; background: linear-gradient(#ff9107, #ff8500); color: #fffbea; font-size: 48px; font-weight: 500; }

footer { height: 108px; background: #000; display: grid; grid-template-columns: 3fr 4fr 4fr 4fr 3fr; align-items: center; }
footer button { display: flex; justify-content: center; align-items: center; height: 100%; }
.mark { align-self: end; justify-self: end; display: flex; gap: 2px; align-items: center; padding: 0 6px 8px 0; color: #595959; }
.mark div { display: flex; flex-direction: column; align-items: center; }
.mark b { font-size: 15px; line-height: 17px; white-space: nowrap; }
.mark small { font-size: 8px; line-height: 9px; font-weight: 700; }
</style>
